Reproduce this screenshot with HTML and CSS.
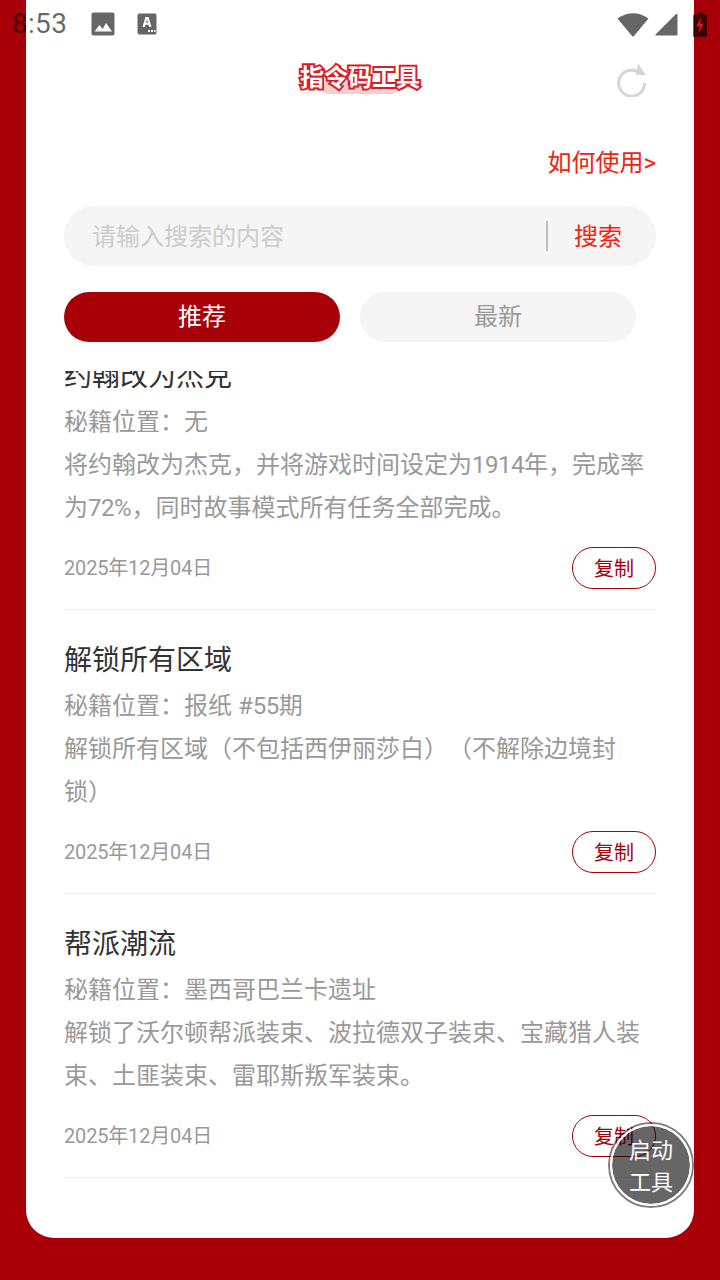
FILE: index.html
```html
<!DOCTYPE html>
<html lang="zh-CN">
<head>
<meta charset="utf-8">
<title>指令码工具</title>
<link rel="stylesheet" href="styles.css">
</head>
<body>
<div class="screen">
  <main class="card">
    <header class="head">
      <div class="title-wrap"><span class="title-pill"></span><h1 class="title">指令码工具</h1></div>
      <svg class="refresh" viewBox="0 0 32 34" width="32" height="34" aria-hidden="true">
        <path d="M21.5 8.6A13 13 0 1 0 28.6 20" fill="none" stroke="#d6d6d6" stroke-width="3"/>
        <path d="M22 0.5 L30 12 H19.5 Z" fill="#d6d6d6"/>
      </svg>
    </header>
    <div class="howto">如何使用&gt;</div>
    <div class="search">
      <span class="placeholder">请输入搜索的内容</span>
      <span class="search-btn">搜索</span>
    </div>
    <div class="tabs">
      <div class="tab tab-on">推荐</div>
      <div class="tab tab-off">最新</div>
    </div>
    <div class="list">
      <div class="list-inner">
        <article class="item">
          <h2 class="item-title">约翰改为杰克</h2>
          <p class="item-text">秘籍位置：无</p>
          <p class="item-text">将约翰改为杰克，并将游戏时间设定为<span class="num">1914</span>年，完成率为<span class="num">72</span>%，同时故事模式所有任务全部完成。</p>
          <div class="item-foot"><span class="date">2025年12月04日</span><span class="copy">复制</span></div>
        </article>
        <article class="item">
          <h2 class="item-title">解锁所有区域</h2>
          <p class="item-text">秘籍位置：报纸 #<span class="num">55</span>期</p>
          <p class="item-text">解锁所有区域（不包括西伊丽莎白）（不解除边境封锁）</p>
          <div class="item-foot"><span class="date">2025年12月04日</span><span class="copy">复制</span></div>
        </article>
        <article class="item">
          <h2 class="item-title">帮派潮流</h2>
          <p class="item-text">秘籍位置：墨西哥巴兰卡遗址</p>
          <p class="item-text">解锁了沃尔顿帮派装束、波拉德双子装束、宝藏猎人装束、土匪装束、雷耶斯叛军装束。</p>
          <div class="item-foot"><span class="date">2025年12月04日</span><span class="copy">复制</span></div>
        </article>
      </div>
    </div>
  </main>

  <div class="status">
    <span class="time">8:53</span>
    <svg class="st-img" viewBox="0 0 24 24" width="24" height="24" aria-hidden="true">
      <path d="M2.5 0.5h19a2 2 0 0 1 2 2v19a2 2 0 0 1-2 2h-19a2 2 0 0 1-2-2v-19a2 2 0 0 1 2-2z" fill="currentColor"/>
      <path d="M3.5 19.5 8.5 13l3.2 4 3.3-6 6 8.500z" fill="#fff"/>
    </svg>
    <svg class="st-a" viewBox="0 0 20 22" width="20" height="22" aria-hidden="true">
      <rect x="0.500" y="0.500" width="19" height="21" rx="2" fill="currentColor"/>
      <path d="M8.500 4h3l3 10h-2.300l-.6-2.300H8.400L7.800 14H5.500zM9 9.800h2l-1-3.600z" fill="#fff" fill-rule="evenodd"/>
      <path d="M11 17h2v2h-2zM14 17h2v2h-2zM17 17h1.500v2H17z" fill="#fff"/>
    </svg>
    <span class="st-gap"></span>
    <svg class="st-wifi" viewBox="0 0 32 25" width="32" height="25" aria-hidden="true">
      <path d="M0.500 6.500Q16-4 31.500 6.500L17 24q-1 1-2 0z" fill="currentColor"/>
    </svg>
    <svg class="st-signal" viewBox="0 0 23 23" width="23" height="23" aria-hidden="true">
      <path d="M0.500 21.500 21 1q1.500-1 1.500 1v19.500q0 1-1 1H1q-1 0-.5-1z" fill="currentColor"/>
    </svg>
    <svg class="st-batt" viewBox="0 0 14 26" width="14" height="26" aria-hidden="true">
      <path d="M4 1.500h6v2h3q1 0 1 1V25q0 1-1 1H1q-1 0-1-1V4.500q0-1 1-1h3z" fill="currentColor"/>
      <path d="M8 6 3.500 15.500H7L5.500 23l5-10.500H7z" fill="#e8151b"/>
    </svg>
  </div>

  <div class="fab"><div class="fab-in">启动<br>工具</div></div>
</div>
</body>
</html>
```
FILE: styles.css
```css
* { box-sizing: border-box; }
html, body { margin: 0; padding: 0; }
body {
  font-family: Roboto, "Noto Sans CJK SC", sans-serif;
  text-spacing-trim: space-all;
}
.screen {
  position: relative;
  width: 720px;
  height: 1280px;
  background: #a80008;
  overflow: hidden;
}
.card {
  margin: 0 26px;
  width: 668px;
  height: 1238px;
  background: #fff;
  border-radius: 0 0 28px 28px;
  padding: 0 38px;
  display: flex;
  flex-direction: column;
  overflow: hidden;
}
.head {
  height: 130px;
  position: relative;
  flex: none;
}
.title-wrap {
  position: absolute;
  left: 234px;
  top: 61px;
  width: 124px;
  height: 36px;
  text-align: center;
}
.title-pill {
  position: absolute;
  left: 24px;
  top: 21px;
  width: 76px;
  height: 12px;
  border-radius: 6px;
  background: #f3cfd1;
}
.title {
  position: relative;
  margin: 0;
  font-size: 24px;
  line-height: 35px;
  font-weight: 700;
  color: #fff;
  -webkit-text-stroke: 4px #dc1c25;
  paint-order: stroke fill;
  white-space: nowrap;
}
.refresh {
  position: absolute;
  left: 552px;
  top: 63px;
}
.howto {
  flex: none;
  height: 76px;
  padding-top: 15px;
  text-align: right;
  font-size: 24px;
  line-height: 36px;
  color: #f2220f;
}
.search {
  flex: none;
  height: 60px;
  border-radius: 30px;
  background: #f5f5f5;
  display: flex;
  align-items: center;
  padding-left: 28px;
  font-size: 24px;
  line-height: 32px;
}
.placeholder { flex: 1; color: #cccccc; padding-top: 2px; }
.search-btn {
  width: 110px;
  height: 30px;
  border-left: 2px solid #bdbdbd;
  padding-left: 26px;
  color: #f2220f;
}
.tabs {
  flex: none;
  margin-top: 26px;
  display: flex;
  gap: 20px;
}
.tab {
  width: 276px;
  height: 50px;
  border-radius: 25px;
  text-align: center;
  font-size: 24px;
  line-height: 50px;
}
.tab-on { background: #a80008; color: #fff; }
.tab-off { background: #f5f5f5; color: #999; }
.list {
  flex: 1;
  margin-top: 29px;
  overflow: hidden;
  min-height: 0;
}
.list-inner { margin-top: -45px; }
.item {
  height: 284px;
  border-bottom: 1px solid #eeeeee;
  padding-top: 28px;
}
.item-title {
  margin: 0 0 2px;
  font-size: 28px;
  font-weight: 400;
  line-height: 45px;
  color: #333;
}
.item-text {
  margin: 0;
  font-size: 24px;
  line-height: 43px;
  color: #999;
}
.num { letter-spacing: -0.48px; }
.item-foot {
  height: 42px;
  margin-top: 17px;
  display: flex;
  align-items: center;
  justify-content: space-between;
}
.date {
  font-size: 20px;
  line-height: 42px;
  letter-spacing: -0.17px;
  color: #999;
}
.copy {
  width: 84px;
  height: 42px;
  border: 1px solid #a80008;
  border-radius: 21px;
  text-align: center;
  font-size: 20px;
  line-height: 42px;
  color: #a80008;
}
.status {
  position: absolute;
  left: 0;
  top: 0;
  width: 720px;
  height: 48px;
  padding: 0 12px;
  display: flex;
  align-items: center;
  color: rgba(0, 0, 0, 0.6);
}
.time { font-size: 28px; line-height: 48px; letter-spacing: 0.3px; }
.st-img { margin-left: 24px; }
.st-a { margin-left: 22px; }
.st-gap { flex: 1; }
.st-signal { margin-left: 6px; }
.st-batt { margin-left: 15px; margin-right: 1px; }
.fab {
  position: absolute;
  left: 608px;
  top: 1122px;
  width: 86px;
  height: 86px;
  border-radius: 50%;
  border: 2px solid rgba(0, 0, 0, 0.5);
  padding: 0;
}
.fab-in {
  width: 82px;
  height: 82px;
  border-radius: 50%;
  border: 2px solid rgba(255, 255, 255, 0.9);
  background: rgba(0, 0, 0, 0.6);
  background-clip: padding-box;
  color: #fff;
  text-align: center;
  font-size: 22px;
  line-height: 32px;
  padding-top: 9px;
}
```
